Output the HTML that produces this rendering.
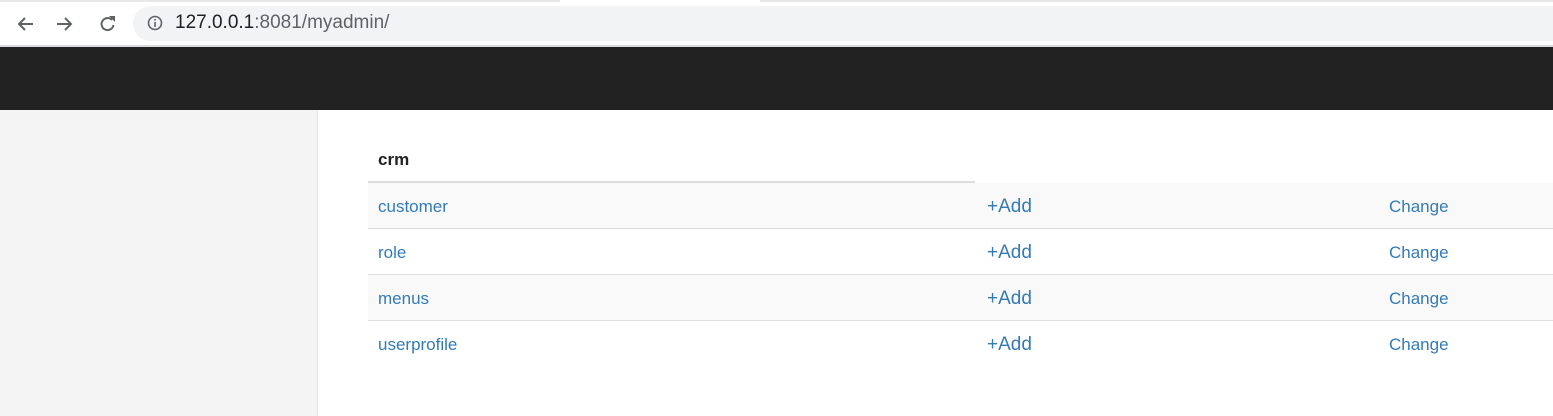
<!DOCTYPE html><html><head><style>
body{margin:0;width:1553px;height:416px;overflow:hidden;font-family:"Liberation Sans",Arial,sans-serif;background:#fff;position:relative}
.a{position:absolute}
.row{position:absolute;left:368px;width:1185px;height:45px;border-bottom:1px solid #ddd;font-size:17px;color:#337ab7}
.row span{position:absolute;top:14px}
.row span.ad{font-size:19px;top:13px;left:619px}
</style></head><body>
<div class="a" style="left:0;top:0;width:1553px;height:46px;background:#fff"></div>
<div class="a" style="left:0;top:0;width:560px;height:2px;background:#e8e8e8"></div>
<div class="a" style="left:760px;top:0;width:793px;height:2px;background:#e8e8e8"></div>
<svg class="a" style="left:14px;top:12px" width="110" height="24" viewBox="0 0 110 24">
<g stroke="#5f6368" stroke-width="2" fill="none">
<path d="M19 12H5M11 6l-6 6 6 6"/>
<path d="M43 12h14M51 6l6 6-6 6"/>
<path d="M98 8a6 6 0 1 0 1.5 5"/></g>
<path d="M95 4h6v6z" fill="#5f6368"/>
</svg>
<div class="a" style="left:133px;top:6px;width:1440px;height:35px;border-radius:18px;background:#f1f3f4"></div>
<svg class="a" style="left:147px;top:15px" width="16" height="16"><circle cx="8" cy="8" r="6.5" stroke="#5f6368" stroke-width="1.6" fill="none"/><rect x="7.2" y="7" width="1.6" height="5" fill="#5f6368"/><rect x="7.2" y="4" width="1.6" height="1.6" fill="#5f6368"/></svg>
<div class="a" style="left:175px;top:12px;font-size:19px;color:#202124">127.0.0.1<span style="color:#5f6368">:8081/myadmin/</span></div>
<div class="a" style="left:0;top:45px;width:1553px;height:2px;background:#dadce0"></div>
<div class="a" style="left:0;top:47px;width:1553px;height:63px;background:#222"></div>
<div class="a" style="left:0;top:110px;width:317px;height:306px;background:#f4f4f4;border-right:1px solid #e5e5e5"></div>
<div class="a" style="left:378px;top:150px;font-size:17px;font-weight:bold;color:#222">crm</div>
<div class="a" style="left:368px;top:181px;width:607px;height:2px;background:#ddd"></div>
<div class="row" style="top:183px;background:#f9f9f9"><span style="left:10px">customer</span><span class="ad">+Add</span><span style="left:1021px">Change</span></div>
<div class="row" style="top:229px"><span style="left:10px">role</span><span class="ad">+Add</span><span style="left:1021px">Change</span></div>
<div class="row" style="top:275px;background:#f9f9f9"><span style="left:10px">menus</span><span class="ad">+Add</span><span style="left:1021px">Change</span></div>
<div class="row" style="top:321px;border-bottom:none"><span style="left:10px">userprofile</span><span class="ad">+Add</span><span style="left:1021px">Change</span></div>
</body></html>
